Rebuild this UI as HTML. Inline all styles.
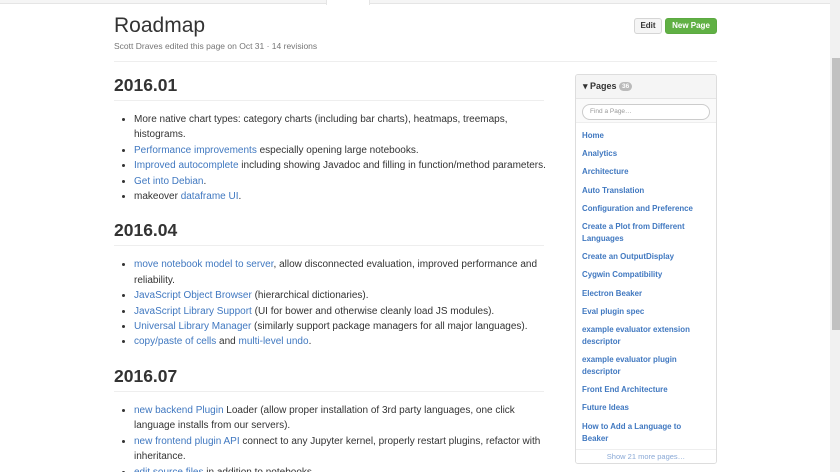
<!DOCTYPE html>
<html><head><style>
*{margin:0;padding:0;box-sizing:border-box}
html,body{width:840px;height:472px;overflow:hidden}
body{background:#fff;font-family:"Liberation Sans",sans-serif;color:#333;position:relative}
a{color:#4078c0;text-decoration:none}
.top{position:absolute;left:0;top:0;width:830px;height:4px;background:#f5f5f5;border-bottom:1px solid #e5e5e5}
.tab{position:absolute;left:326px;top:0;width:44px;height:5px;background:#fff;border-left:1px solid #e5e5e5;border-right:1px solid #e5e5e5}
.sb{position:absolute;left:830px;top:0;width:10px;height:472px;background:#f1f1f1}
.thumb{position:absolute;left:832px;top:58px;width:8px;height:272px;background:#c1c1c1}
h1{position:absolute;left:114px;top:14px;font-size:21px;font-weight:normal;color:#333}
.meta{position:absolute;left:114px;top:41px;font-size:8.5px;color:#767676}
.hr0{position:absolute;left:114px;top:61px;width:603px;border-top:1px solid #eee}
.btn{position:absolute;top:18px;height:16px;font-size:8px;font-weight:bold;border-radius:3px;line-height:14px;text-align:center}
.edit{left:634px;width:28px;background:#f5f5f5;border:1px solid #d5d5d5;color:#333}
.new{left:665px;width:52px;background:#60b044;border:1px solid #5ca941;color:#fff}
.main{position:absolute;left:114px;top:73px;width:430px}
h2{font-size:17.5px;font-weight:bold;line-height:24px;padding-bottom:3px;border-bottom:1px solid #eee;margin-bottom:11px;color:#333;margin-top:0}
ul{margin-left:20px;margin-right:-10px;font-size:10px;line-height:15.4px;margin-bottom:14px}
.side{position:absolute;left:575px;top:74px;width:142px;height:390px;border:1px solid #ddd;border-radius:3px;overflow:hidden}
.sh{height:24px;background:#f5f5f5;border-bottom:1px solid #e5e5e5;font-size:9px;font-weight:bold;padding:6px 0 0 7px}
.cnt{display:inline-block;background:#bbb;color:#fff;border-radius:6px;font-size:6.5px;padding:1px 3px;vertical-align:1px}
.sr{height:24px;background:#fafafa;border-bottom:1px solid #eee;padding:5px 6px}
.in{height:16px;border:1px solid #ccc;border-radius:8px;background:#fff;font-size:6.5px;color:#999;padding:3px 7px}
.li{font-size:7.9px;font-weight:bold;padding:0 18px 0 6px;line-height:12px}
.li a{display:block;margin-bottom:6.2px}
.more{position:absolute;bottom:0;left:0;right:0;height:14px;border-top:1px solid #eee;text-align:center;font-size:7.5px;color:#8aa9d6;line-height:13px;background:#fff}
</style></head><body>
<div class="top"></div><div class="tab"></div>
<div class="sb"></div><div class="thumb"></div>
<h1>Roadmap</h1>
<div class="meta">Scott Draves edited this page on Oct 31 · 14 revisions</div>
<div class="btn edit">Edit</div><div class="btn new">New Page</div>
<div class="hr0"></div>
<div class="main">
<h2>2016.01</h2>
<ul>
<li>More native chart types: category charts (including bar charts), heatmaps, treemaps, histograms.</li>
<li><a>Performance improvements</a> especially opening large notebooks.</li>
<li><a>Improved autocomplete</a> including showing Javadoc and filling in function/method parameters.</li>
<li><a>Get into Debian</a>.</li>
<li>makeover <a>dataframe UI</a>.</li>
</ul>
<h2>2016.04</h2>
<ul>
<li><a>move notebook model to server</a>, allow disconnected evaluation, improved performance and reliability.</li>
<li><a>JavaScript Object Browser</a> (hierarchical dictionaries).</li>
<li><a>JavaScript Library Support</a> (UI for bower and otherwise cleanly load JS modules).</li>
<li><a>Universal Library Manager</a> (similarly support package managers for all major languages).</li>
<li><a>copy/paste of cells</a> and <a>multi-level undo</a>.</li>
</ul>
<h2>2016.07</h2>
<ul>
<li><a>new backend Plugin</a> Loader (allow proper installation of 3rd party languages, one click language installs from our servers).</li>
<li><a>new frontend plugin API</a> connect to any Jupyter kernel, properly restart plugins, refactor with inheritance.</li>
<li><a>edit source files</a> in addition to notebooks.</li>
</ul>
</div>
<div class="side">
<div class="sh">▾ Pages <span class="cnt">36</span></div>
<div class="sr"><div class="in">Find a Page…</div></div>
<div class="li" style="padding-top:7px">
<a>Home</a><a>Analytics</a><a>Architecture</a><a>Auto Translation</a><a>Configuration and Preference</a><a>Create a Plot from Different Languages</a><a>Create an OutputDisplay</a><a>Cygwin Compatibility</a><a>Electron Beaker</a><a>Eval plugin spec</a><a>example evaluator extension descriptor</a><a>example evaluator plugin descriptor</a><a>Front End Architecture</a><a>Future Ideas</a><a>How to Add a Language to Beaker</a>
</div>
<div class="more">Show 21 more pages…</div>
</div>
</body></html>
